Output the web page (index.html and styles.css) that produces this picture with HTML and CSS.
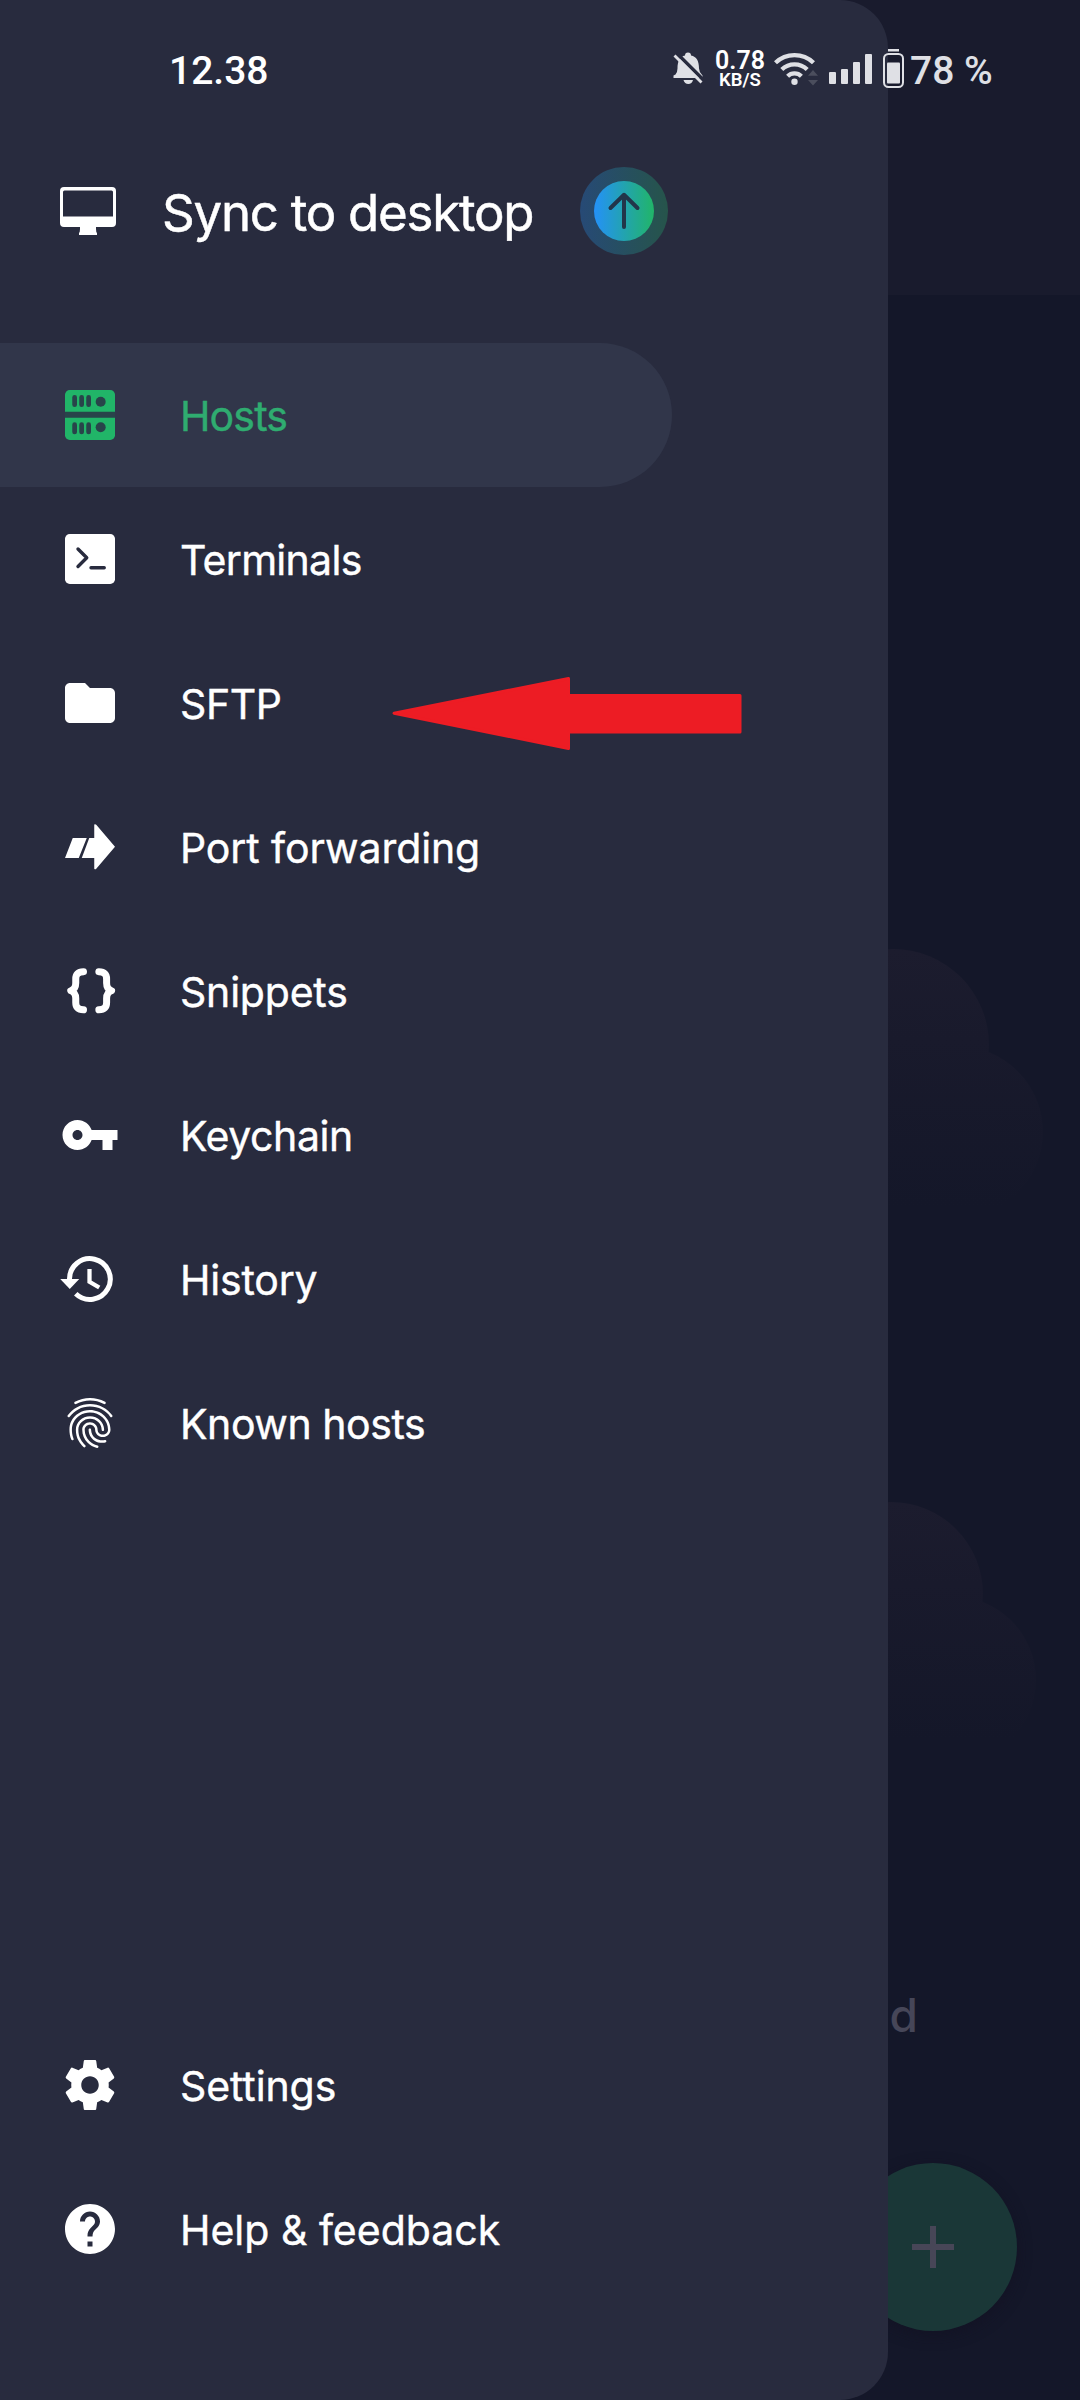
FILE: index.html
```html
<!DOCTYPE html>
<html lang="en">
<head>
<meta charset="utf-8">
<title>Hosts</title>
<link rel="stylesheet" href="styles.css">
</head>
<body>
<div class="screen">
  <main class="page">
    <div class="page-header"></div>
    <svg class="cloud cloud-first" viewBox="0 0 300 270">
      <defs><linearGradient id="c1" gradientUnits="userSpaceOnUse" x1="0" y1="4" x2="0" y2="262"><stop offset="0" stop-color="#1c1c2e"/><stop offset=".35" stop-color="#191a2c"/><stop offset="1" stop-color="#141729"/></linearGradient></defs>
      <g fill="url(#c1)"><circle cx="145" cy="100" r="96"/><circle cx="209" cy="187" r="86"/><rect x="60" y="100" width="149" height="170"/></g>
    </svg>
    <svg class="cloud cloud-second" viewBox="0 0 300 270">
      <defs><linearGradient id="c2" gradientUnits="userSpaceOnUse" x1="0" y1="2" x2="0" y2="240"><stop offset="0" stop-color="#1c1c2e"/><stop offset=".35" stop-color="#191a2c"/><stop offset="1" stop-color="#141729"/></linearGradient></defs>
      <g fill="url(#c2)"><circle cx="143" cy="94" r="92"/><circle cx="204" cy="180" r="84"/><rect x="60" y="94" width="144" height="170"/></g>
    </svg>
    <p class="page-text">ed</p>
    <div class="fab"><svg width="42" height="42" viewBox="0 0 42 42"><path d="M18 0h6v18h18v6H24v18h-6V24H0v-6h18z" fill="#474657"/></svg></div>
  </main>

  <aside class="drawer">
    <div class="sync">
      <svg width="56" height="48" viewBox="0 0 56 48"><path fill="#fff" fill-rule="evenodd" d="M4 0H52a4 4 0 0 1 4 4V36a4 4 0 0 1-4 4H36v2q0 3 1 4v2H19v-2q1-1 1-4v-2H4a4 4 0 0 1-4-4V4A4 4 0 0 1 4 0zM4.500 3.500Q3 3.500 3 5V29.500H53V5q0-1.500-1.500-1.500z"/></svg>
      <span class="sync-label">Sync to desktop</span>
      <svg width="88" height="88" viewBox="0 0 88 88">
        <defs><linearGradient id="g"><stop offset="0" stop-color="#2491f8"/><stop offset="1" stop-color="#21b568"/></linearGradient></defs>
        <circle cx="44" cy="44" r="44" fill="url(#g)" opacity=".3"/><circle cx="44" cy="44" r="30" fill="url(#g)"/>
        <path d="M44 60V28M30.500 41 44 27.800 57.500 41" fill="none" stroke="#22354a" stroke-width="4" stroke-linecap="round" stroke-linejoin="round"/>
      </svg>
    </div>

    <nav class="menu">
      <a class="item active"><svg class="icon" viewBox="0 0 24 24"><rect x="2" y="2" width="20" height="20" rx="1.900" fill="#21b568"/><g fill="#28444a"><path d="M2 10.700h20v2.400H2z"/><rect x="4.900" y="4" width="1.900" height="4.800" rx=".95"/><rect x="7.700" y="4" width="1.900" height="4.800" rx=".95"/><rect x="10.500" y="4" width="1.900" height="4.800" rx=".95"/><circle cx="16.270" cy="6.700" r="2"/><rect x="4.900" y="14.900" width="1.900" height="4.800" rx=".95"/><rect x="7.700" y="14.900" width="1.900" height="4.800" rx=".95"/><rect x="10.500" y="14.900" width="1.900" height="4.800" rx=".95"/><circle cx="16.270" cy="16.900" r="2"/></g></svg><span class="label hosts">Hosts</span></a>
      <a class="item"><svg class="icon" viewBox="0 0 24 24"><rect x="2" y="2" width="20" height="20" rx="1.900"/><path d="M7.200 8l3.500 3.500-3.500 3.500M12.400 15.500h5.300" fill="none" stroke="#282b3e" stroke-width="1.350" stroke-linecap="round" stroke-linejoin="round"/></svg><span class="label terminals">Terminals</span></a>
      <a class="item"><svg class="icon" viewBox="0 0 24 24"><path d="M10 4H4c-1.100 0-2 .9-2 2v12c0 1.100.9 2 2 2h16c1.100 0 2-.9 2-2V8c0-1.100-.9-2-2-2h-8z"/></svg><span class="label sftp">SFTP</span></a>
      <a class="item"><svg class="icon" viewBox="0 0 24 24"><path d="M5.100 8.400h5.600L7.500 16.400H2zM11.700 8.400h2V3q.4-.3.8.1L22 11.900l-7.500 8.800q-.4.400-.8 0v-4.300h-5z"/></svg><span class="label port">Port forwarding</span></a>
      <a class="item"><svg class="icon" viewBox="0 0 24 24"><path d="M9.400 4.300C7.100 4.400 6.300 5.500 6.300 7.200v1.600c0 1.700-.7 2.700-2 3.100 1.300.4 2 1.400 2 3.100v1.600c0 1.700.8 2.800 3.100 2.900M15.540 4.300c2.300.1 3.100 1.200 3.100 2.900v1.600c0 1.700.7 2.700 2 3.100-1.300.4-2 1.400-2 3.100v1.600c0 1.700-.8 2.800-3.100 2.900" fill="none" stroke="#fff" stroke-width="2.800" stroke-linecap="round" stroke-linejoin="round"/></svg><span class="label snippets">Snippets</span></a>
      <a class="item"><svg class="icon" viewBox="0 0 24 24"><path d="M12.650 10C11.830 7.670 9.610 6 7 6c-3.310 0-6 2.690-6 6s2.690 6 6 6c2.610 0 4.830-1.670 5.650-4H17v4h4v-4h2v-4H12.650zM7 14c-1.100 0-2-.9-2-2s.9-2 2-2 2 .9 2 2-.9 2-2 2z"/></svg><span class="label keychain">Keychain</span></a>
      <a class="item"><svg class="icon" viewBox="0 0 24 24"><path d="M.1 12h7.600l-3.800 4z"/><path d="M3.800 12.300A8.150 8.150 0 1 1 6.300 17.900" fill="none" stroke="#fff" stroke-width="2"/><path d="M11.800 8v5.100l3.900 2.300" fill="none" stroke="#fff" stroke-width="1.700"/></svg><span class="label history">History</span></a>
      <a class="item"><svg class="icon" viewBox="0 0 24 24"><path d="M17.810 4.470c-.08 0-.16-.02-.23-.06C15.660 3.420 14 3 12.010 3c-1.980 0-3.860.47-5.570 1.410-.24.13-.54.04-.68-.2-.13-.24-.04-.55.2-.68C7.820 2.520 9.860 2 12.010 2c2.130 0 3.990.47 6.030 1.520.25.13.34.43.21.67-.09.18-.26.28-.44.28zM3.500 9.720c-.1 0-.2-.03-.29-.09-.23-.16-.28-.47-.12-.7.99-1.400 2.250-2.500 3.750-3.270C9.980 4.040 14 4.030 17.150 5.650c1.500.77 2.760 1.860 3.750 3.250.16.22.11.54-.12.7-.23.16-.54.11-.7-.12-.9-1.260-2.040-2.250-3.390-2.940-2.870-1.470-6.540-1.470-9.400.01-1.360.7-2.500 1.700-3.400 2.960-.08.14-.23.21-.39.21zm6.250 12.070c-.13 0-.26-.05-.35-.15-.87-.87-1.340-1.430-2.010-2.640-.69-1.230-1.050-2.730-1.050-4.340 0-2.970 2.540-5.390 5.660-5.390s5.660 2.420 5.660 5.390c0 .28-.22.5-.5.5s-.5-.22-.5-.5c0-2.420-2.090-4.390-4.660-4.390-2.570 0-4.660 1.970-4.660 4.390 0 1.440.32 2.770.93 3.850.64 1.150 1.080 1.640 1.850 2.420.19.2.19.51 0 .71-.11.1-.24.15-.37.15zm7.170-1.850c-1.190 0-2.240-.3-3.100-.89-1.490-1.010-2.380-2.650-2.380-4.390 0-.28.22-.5.5-.5s.5.22.5.5c0 1.410.72 2.740 1.940 3.560.71.48 1.540.71 2.540.71.24 0 .64-.03 1.040-.1.27-.05.53.13.58.41.05.27-.13.53-.41.58-.57.11-1.070.12-1.210.12zM14.910 22c-.04 0-.09-.01-.13-.02-1.590-.44-2.630-1.030-3.720-2.100-1.400-1.390-2.170-3.240-2.170-5.220 0-1.620 1.380-2.940 3.080-2.940 1.700 0 3.080 1.320 3.080 2.940 0 1.070.93 1.940 2.080 1.940s2.080-.87 2.080-1.940c0-3.770-3.250-6.830-7.250-6.830-2.840 0-5.440 1.580-6.610 4.030-.39.81-.59 1.760-.59 2.800 0 .78.07 2.010.67 3.610.1.26-.03.55-.29.64-.26.1-.55-.04-.64-.29-.49-1.310-.73-2.610-.73-3.960 0-1.200.23-2.290.68-3.240 1.330-2.790 4.280-4.600 7.510-4.600 4.550 0 8.250 3.510 8.250 7.830 0 1.620-1.380 2.940-3.080 2.940s-3.080-1.320-3.080-2.940c0-1.070-.93-1.940-2.080-1.940s-2.080.87-2.080 1.940c0 1.710.66 3.310 1.870 4.510.95.94 1.860 1.460 3.270 1.850.27.07.42.35.35.61-.05.23-.26.38-.47.38z"/></svg><span class="label known">Known hosts</span></a>
    </nav>

    <nav class="menu menu-bottom">
      <a class="item"><svg class="icon" viewBox="0 0 24 24"><path d="M19.430 12.980c.04-.32.07-.64.07-.98s-.03-.66-.07-.98l2.110-1.650c.19-.15.24-.42.12-.64l-2-3.460c-.12-.22-.39-.3-.61-.22l-2.490 1c-.52-.4-1.080-.73-1.690-.98l-.38-2.650C14.460 2.180 14.250 2 14 2h-4c-.25 0-.46.18-.49.42l-.38 2.650c-.61.25-1.170.59-1.690.98l-2.490-1c-.23-.09-.49 0-.61.22l-2 3.460c-.13.22-.07.49.12.64l2.110 1.650c-.04.32-.07.65-.07.98s.03.66.07.98l-2.110 1.650c-.19.15-.24.42-.12.64l2 3.460c.12.22.39.3.61.22l2.490-1c.52.4 1.080.73 1.690.98l.38 2.650c.03.24.24.42.49.42h4c.25 0 .46-.18.49-.42l.38-2.650c.61-.25 1.170-.59 1.690-.98l2.490 1c.23.09.49 0 .61-.22l2-3.460c.12-.22.07-.49-.12-.64l-2.110-1.650zM12 15.500c-1.930 0-3.500-1.570-3.500-3.500s1.570-3.500 3.500-3.500 3.500 1.570 3.500 3.500-1.570 3.500-3.500 3.500z"/></svg><span class="label settings">Settings</span></a>
      <a class="item"><svg class="icon" viewBox="0 0 24 24"><path d="M12 2C6.480 2 2 6.480 2 12s4.480 10 10 10 10-4.480 10-10S17.520 2 12 2zm1 17h-2v-2h2v2zm2.070-7.750l-.9.920C13.450 12.900 13 13.500 13 15h-2v-.5c0-1.100.45-2.100 1.170-2.830l1.240-1.260c.37-.36.59-.86.59-1.410 0-1.100-.9-2-2-2s-2 .9-2 2H8c0-2.210 1.790-4 4-4s4 1.790 4 4c0 .88-.36 1.680-.93 2.250z"/></svg><span class="label help">Help &amp; feedback</span></a>
    </nav>

    <svg class="pointer" width="350" height="74" viewBox="0 0 350 74"><path d="M2 37.200 176.500 2.500V19.500H348V56H176.500V72.500z" fill="#ed1c24" stroke="#ed1c24" stroke-width="3" stroke-linejoin="round"/></svg>
  </aside>

  <header class="status">
    <span class="time">12.38</span>
    <svg class="bell" width="32" height="44" viewBox="0 0 32 44" fill="#dfe0e5"><path d="M3.500 27.500Q5.500 25 5.500 21.500C5.500 14 8 9.500 13 8.500a3 3 0 0 1 6 0C24.500 9.500 27 14 27 21.500Q27 25 30.500 28.500V31H1.500V28.500zM11.500 33H21q-1 4-4.700 4t-4.800-4z"/><path d="M4.500 6 33.500 35" stroke="#282b3e" stroke-width="3.500" fill="none"/><path d="M2.500 8.500 29.500 35.500" stroke="#dfe0e5" stroke-width="2.800" fill="none"/></svg>
    <span class="net"><span class="net-value">0.78</span><span class="net-unit">KB/S</span></span>
    <svg class="wifi" width="46" height="44" viewBox="0 0 46 44"><g fill="none" stroke="#dfe0e5" stroke-width="4.300"><path d="M2.500 15.800a27.500 27.500 0 0 1 38 0"/><path d="M8.800 22.500a18.300 18.300 0 0 1 25.400 0"/><path d="M14.600 29.200a9.900 9.900 0 0 1 13.800 0"/></g><circle cx="21.500" cy="34.700" r="3.200" fill="#dfe0e5"/><path d="M35 28.800 40 23l5 5.800zM35 33h10l-5 5.500z" fill="#4b4e5d"/></svg>
    <svg class="bars" width="44" height="44" viewBox="0 0 44 44" fill="#dfe0e5"><rect y="25" width="7" height="12" rx="1"/><rect x="12" y="22" width="7" height="15" rx="1"/><rect x="24" y="15" width="7" height="22" rx="1"/><rect x="36" y="7" width="7" height="30" rx="1"/></svg>
    <svg class="battery" width="23" height="44" viewBox="0 0 23 44" fill="#dfe0e5"><path d="M6 2h11v2.500H6z"/><rect x="2" y="7" width="19" height="33" rx="4.500" fill="none" stroke="#dfe0e5" stroke-width="2"/><rect x="5" y="15.500" width="13" height="21" rx="1"/></svg>
    <span class="percent">78 %</span>
  </header>
</div>
</body>
</html>
```
FILE: styles.css
```css
body { margin: 0; background: #141729; }

.screen {
  display: grid;
  width: 1080px;
  height: 2400px;
  overflow: hidden;
  color: #fff;
  font-family: Inter, sans-serif;
}

.screen > * { grid-area: 1 / 1; }

/* Dimmed page behind the drawer */
.page { display: flex; flex-direction: column; align-items: flex-start; background: #141729; }
.page-header { width: 100%; height: 295px; background: #191b2d; }
.cloud { width: 300px; height: 270px; margin-left: 748px; }
.cloud-first { margin-top: 650px; }
.cloud-second { margin-top: 285px; }
.page-text {
  width: 918px;
  margin: 217px 0 0;
  text-align: right;
  font-size: 46px;
  font-weight: 500;
  line-height: 56px;
  color: #464658;
}
.fab {
  display: flex;
  align-items: center;
  justify-content: center;
  width: 168px;
  height: 168px;
  margin: 120px 0 0 849px;
  border-radius: 50%;
  background: #1a3737;
  box-shadow: 0 4px 14px rgba(18, 16, 34, .6);
}

/* Navigation drawer */
.drawer {
  position: relative;
  display: flex;
  flex-direction: column;
  box-sizing: border-box;
  width: 888px;
  padding: 167px 0 99px;
  border-radius: 0 48px 48px 0;
  background: #282b3e;
}

.sync { display: flex; align-items: center; height: 88px; padding-left: 60px; }
.sync-label {
  box-sizing: border-box;
  width: 418px;
  margin-left: 46px;
  padding-top: 4px;
  white-space: nowrap;
  font-size: 51px;
  line-height: 62px;
  letter-spacing: -1.25px;
  -webkit-text-stroke: .5px currentColor;
}

.menu { margin-top: 88px; }
.menu-bottom { margin-top: auto; }
.item { display: flex; align-items: center; box-sizing: border-box; width: 672px; height: 144px; padding-left: 60px; gap: 60px; }
.active { color: #2fac70; background: #31364a; border-radius: 0 72px 72px 0; }
.icon { width: 60px; height: 60px; fill: #fff; }
.label { padding-top: 2px; font-size: 41px; line-height: 50px; white-space: nowrap; -webkit-text-stroke: .4px currentColor; }
.hosts { letter-spacing: -.85px; }
.terminals { letter-spacing: -.7px; }
.sftp { letter-spacing: -.4px; }
.port { letter-spacing: -.1px; }
.snippets { letter-spacing: -.2px; }
.keychain { letter-spacing: -.4px; }
.history { letter-spacing: -.2px; }
.known { letter-spacing: -.44px; }
.settings { letter-spacing: -.1px; }

.pointer { position: absolute; left: 392px; top: 676px; }

/* Status bar */
.status {
  position: relative;
  display: flex;
  align-items: center;
  align-self: start;
  height: 44px;
  padding: 47px 0 0 169px;
  font-family: Roboto, sans-serif;
  font-weight: 500;
}
.time, .percent { padding-top: 3px; font-size: 39px; line-height: 46px; white-space: nowrap; }
.time { width: 503px; }
.net {
  display: flex;
  flex-direction: column;
  align-items: center;
  align-self: flex-start;
  width: 48px;
  margin-left: 12px;
  padding-top: 2px;
  font-weight: 600;
}
.net-value { font-size: 25px; line-height: 24px; }
.net-unit { font-size: 18.5px; line-height: 14px; }
.wifi { margin-left: 9px; }
.bars { margin-left: 10px; }
.battery { margin-left: 9px; }
.percent { margin-left: 5px; color: #dfe0e5; }
```
